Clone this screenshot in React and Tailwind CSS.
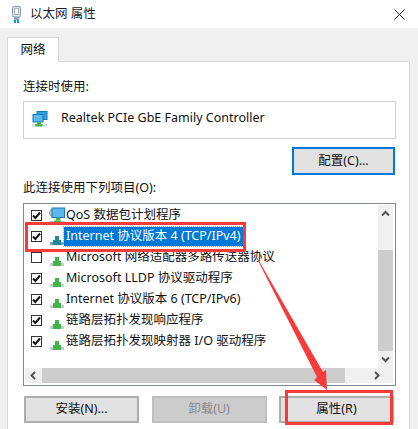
const font = { fontFamily: '"Noto Sans", "Noto Sans CJK SC", sans-serif' };

const items = [
  { label: "QoS 数据包计划程序", checked: true, icon: "qos" },
  { label: "Internet 协议版本 4 (TCP/IPv4)", checked: true, selected: true },
  { label: "Microsoft 网络适配器多路传送器协议", checked: false },
  { label: "Microsoft LLDP 协议驱动程序", checked: true },
  { label: "Internet 协议版本 6 (TCP/IPv6)", checked: true },
  { label: "链路层拓扑发现响应程序", checked: true },
  { label: "链路层拓扑发现映射器 I/O 驱动程序", checked: true },
];

function CableIcon() {
  return (
    <svg width="9" height="17" viewBox="0 0 9 17" className="shrink-0">
      <rect x="0.5" y="0.5" width="8" height="10.5" rx="1.5" fill="#e4e9ef" stroke="#8a97a6" />
      <rect x="2.5" y="2.5" width="4" height="6" fill="#fff" stroke="#a9b4c0" />
      <rect x="2" y="11" width="5" height="3" fill="#7fa6c9" />
      <rect x="2" y="14" width="2" height="3" fill="#0a9bd8" />
      <rect x="5" y="14" width="2" height="3" fill="#0a9bd8" />
    </svg>
  );
}

function AdapterIcon() {
  return (
    <svg width="16" height="16" viewBox="0 0 16 16" className="shrink-0">
      <rect x="5" y="0.5" width="10" height="8" fill="#2f9fe0" stroke="#1778b8" />
      <rect x="1" y="3.5" width="10" height="7.5" fill="#5cb8ec" stroke="#1778b8" />
      <rect x="5" y="11" width="4" height="2" fill="#3fb54a" />
      <rect x="0" y="13" width="15" height="2.5" fill="#d5d8d5" />
      <rect x="3.5" y="13" width="7" height="2.5" fill="#3fb54a" />
    </svg>
  );
}

function ProtocolIcon({ selected }) {
  const green = selected ? "#1f8a9e" : "#3fb54a";
  return (
    <svg width="14" height="9" viewBox="0 0 14 9" className="shrink-0">
      <rect x="5" y="0" width="4" height="4" fill={green} />
      <rect x="0" y="6" width="14" height="3" fill={selected ? "#7fa3b0" : "#c8cbc8"} />
      <rect x="3" y="4" width="8" height="5" fill={green} />
    </svg>
  );
}

function QosIcon() {
  return (
    <svg width="16" height="17" viewBox="0 0 16 17" className="shrink-0">
      <circle cx="4" cy="6" r="3.5" fill="#c9ced3" stroke="#8d949b" />
      <rect x="3" y="1" width="12.5" height="9.5" fill="#5cb8ec" stroke="#1778b8" />
      <rect x="7" y="10.5" width="4" height="3" fill="#3fb54a" />
      <rect x="1" y="14" width="15" height="2.5" fill="#c8cbc8" />
      <rect x="5" y="13.5" width="7" height="3" fill="#3fb54a" />
    </svg>
  );
}

function Checkbox({ checked }) {
  return (
    <span className="flex h-[11px] w-[11px] shrink-0 items-center justify-center border border-[#333] bg-white">
      {checked && (
        <svg width="9" height="9" viewBox="0 0 9 9">
          <path d="M1 4.5 L3.4 7 L8 1.5" fill="none" stroke="#111" strokeWidth="2" />
        </svg>
      )}
    </span>
  );
}

function Row({ item }) {
  return (
    <div className="flex h-[21px] items-center whitespace-nowrap">
      <span className="ml-[7px] flex w-[18px] shrink-0">
        <Checkbox checked={item.checked} />
      </span>
      <span className="flex w-[15px] shrink-0 items-end justify-center self-stretch pb-[2px]">
        {item.icon === "qos" ? <QosIcon /> : <ProtocolIcon selected={item.selected} />}
      </span>
      <span
        className={
          item.selected
            ? "bg-[#0078d7] px-[2px] text-white outline-1 outline-dotted outline-[#f59e42]"
            : "px-[2px] text-[#111]"
        }
      >
        {item.label}
      </span>
    </div>
  );
}

function Chevron({ d }) {
  return (
    <svg width="9" height="9" viewBox="0 0 9 9">
      <path d={d} fill="none" stroke="#555" strokeWidth="2" />
    </svg>
  );
}

function DialogButton({ children, disabled, className = "" }) {
  return (
    <button
      className={`flex h-[27px] items-center justify-center border-2 ${
        disabled ? "border-[#bfbfbf] bg-[#cccccc] text-[#8a8a8a]" : "border-[#adadad] bg-[#e1e1e1] text-[#111]"
      } ${className}`}
    >
      {children}
    </button>
  );
}

export default function App() {
  return (
    <div className="relative h-[429px] w-[418px] overflow-hidden bg-[#f0f0f0] text-[12.5px]" style={font}>
      {/* title bar */}
      <div className="flex h-[28px] items-center bg-white pl-[12px] pr-[13px]">
        <CableIcon />
        <span className="ml-[9px] text-[#222]">以太网 属性</span>
        <svg width="11" height="11" viewBox="0 0 11 11" className="ml-auto">
          <path d="M0.5 0.5 L10.5 10.5 M10.5 0.5 L0.5 10.5" stroke="#222" strokeWidth="1" />
        </svg>
      </div>

      <div className="px-[7px] pt-[9px]">
        {/* tab */}
        <div className="relative z-10 flex h-[25px] w-[52px] items-center justify-center border border-b-0 border-[#d9d9d9] bg-white text-[#111]">
          网络
        </div>

        <div className="-mt-px h-[400px] w-[403px] border border-[#d9d9d9] bg-white pl-[15px] pr-[13px]">
          <div className="flex h-[39px] items-end pb-[5px] leading-[18px] text-[#111]">连接时使用:</div>

          <div className="flex h-[38px] w-[373px] items-center border border-[#d0d0d0] pb-[3px] pl-[8px] text-[#111]">
            <AdapterIcon />
            <span className="ml-[13px]">Realtek PCIe GbE Family Controller</span>
          </div>

          <div className="mt-[8px] flex justify-end pr-[1px]">
            <button className="flex h-[28px] w-[103px] items-center justify-center border-2 border-[#0078d7] bg-[#e1e1e1] text-[#111]">
              配置(C)...
            </button>
          </div>

          <div className="mt-[4px] leading-[18px] text-[#111]">此连接使用下列项目(O):</div>

          <div className="mt-[6px] flex h-[183px] w-[373px] flex-col border border-[#828790] bg-white">
            <div className="flex min-h-0 flex-1">
              <div className="min-w-0 flex-1 overflow-hidden pt-px">
                {items.map((item) => (
                  <Row key={item.label} item={item} />
                ))}
              </div>
              <div className="mr-[2px] mt-px flex w-[15px] flex-col bg-[#f0f0f0]">
                <div className="flex h-[16px] items-center justify-center">
                  <Chevron d="M1 6.5 L4.5 3 L8 6.5" />
                </div>
                <div className="mt-[29px] flex-1 bg-[#cdcdcd]" />
                <div className="flex h-[17px] items-center justify-center">
                  <Chevron d="M1 2.5 L4.5 6 L8 2.5" />
                </div>
              </div>
            </div>
            <div className="mb-[2px] ml-px mr-[2px] flex h-[15px] bg-[#f0f0f0]">
              <div className="flex w-[17px] items-center justify-center">
                <Chevron d="M6 1 L2.5 4.5 L6 8" />
              </div>
              <div className="w-[303px] bg-[#cdcdcd]" />
              <div className="ml-auto flex w-[33px] items-center justify-center">
                <Chevron d="M3 1 L6.5 4.5 L3 8" />
              </div>
            </div>
          </div>

          <div className="mt-[10px] flex w-[371px] justify-between pl-px">
            <DialogButton className="w-[115px]">安装(N)...</DialogButton>
            <DialogButton className="w-[115px]" disabled>卸载(U)</DialogButton>
            <DialogButton className="w-[115px]">属性(R)</DialogButton>
          </div>
        </div>
      </div>

      {/* red annotations on top of the screenshot */}
      <div className="absolute left-[25px] top-[222px] h-[30px] w-[221px] border-[3px] border-[#f73b3b]" />
      <div className="absolute left-[285px] top-[390px] h-[35px] w-[108px] border-[3px] border-[#f73b3b]" />
      <svg width="418" height="429" viewBox="0 0 418 429" className="pointer-events-none absolute left-0 top-0">
        <path d="M251 247 L317 377 L314 380 L327 390 L326 370 L323 372 Z" fill="#f73b3b" />
      </svg>
    </div>
  );
}
